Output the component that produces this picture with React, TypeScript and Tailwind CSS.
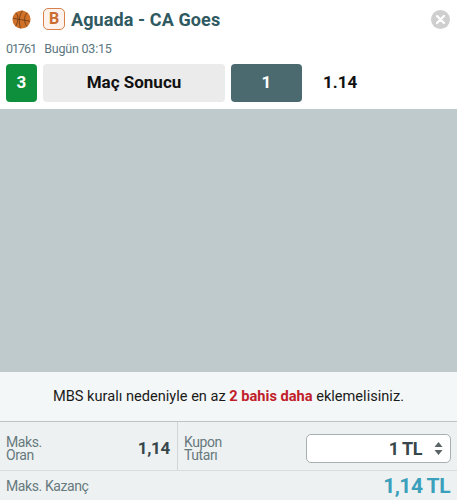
export default function App() {
  return (
    <div className="w-[457px] h-[500px] overflow-hidden flex flex-col bg-white font-['Roboto',sans-serif]">
      {/* match title */}
      <div className="h-[38px] flex items-center pl-3 pr-[7px] shrink-0">
        <svg width="19" height="19" viewBox="0 0 20 20" className="shrink-0">
          <circle cx="10" cy="10" r="9.5" fill="#d0712a" />
          <g fill="none" stroke="#6e3c16" strokeWidth="0.9">
            <path d="M1 8.5 C6 10 14 10.5 19 12" />
            <path d="M11 .6 C7 6 7 14 9 19.4" />
            <path d="M4 3 C7 6 7 11 4 17" />
            <path d="M16 3 C12.500 6.500 12.500 12 15.500 17.500" />
          </g>
        </svg>
        <div className="ml-[12px] w-[22px] h-[22px] rounded-[5px] border border-[#d9814a] bg-[#fdf3ec] flex items-center justify-center text-[16px] font-bold text-[#cc6d30] shrink-0">
          B
        </div>
        <div className="ml-[6px] text-[18px] font-bold text-[#2f5a61] tracking-[0.1px]">Aguada - CA Goes</div>
        <div className="ml-auto w-[19px] h-[19px] rounded-full bg-[#cfcfcf] flex items-center justify-center shrink-0">
          <svg width="9" height="9" viewBox="0 0 9 9">
            <path d="M1 1 L8 8 M8 1 L1 8" stroke="#fff" strokeWidth="2.200" strokeLinecap="round" />
          </svg>
        </div>
      </div>

      <div className="h-[20px] mt-[1px] flex items-center pl-[6px] text-[12.5px] text-[#5c7780] shrink-0">
        <span className="tracking-[-1px]">01761</span>
        <span className="ml-[8px] tracking-[-0.2px]">Bugün 03:15</span>
      </div>

      {/* selected bet */}
      <div className="mt-[5px] h-[38px] flex items-center pl-[6px] shrink-0">
        <div className="w-[31px] h-[38px] rounded-[4px] bg-[#0e8f3c] flex items-center justify-center text-white font-bold text-[17px]">3</div>
        <div className="ml-[6px] w-[182px] h-[38px] rounded-[4px] bg-[#ebebeb] flex items-center justify-center text-[#111] font-bold text-[17px]">Maç Sonucu</div>
        <div className="ml-[6px] w-[71px] h-[38px] rounded-[4px] bg-[#4a6a70] flex items-center justify-center text-white font-bold text-[17px]">1</div>
        <div className="ml-[21px] text-[17px] font-bold text-[#111]">1.14</div>
      </div>

      <div className="mt-[7px] h-[263px] bg-[#bfcacc] shrink-0" />

      {/* MBS warning */}
      <div className="h-[50px] bg-[#f4f7f7] border-b border-[#bcc4c6] flex items-center justify-center text-[14.6px] text-[#1a1a1a] shrink-0">
        <span>
          MBS kuralı nedeniyle en az <b className="text-[#c0202a] font-bold">2 bahis daha</b> eklemelisiniz.
        </span>
      </div>

      {/* coupon footer */}
      <div className="h-[49px] flex bg-[#eef1f2] border-b border-[#d8dddf] shrink-0">
        <div className="w-[178px] border-r border-[#d0d6d8] flex items-center justify-between pl-[6px] pr-[7px] pt-[5px]">
          <div className="text-[14px] leading-[13px] tracking-[-0.4px] text-[#66797d]">
            Maks.
            <br />
            Oran
          </div>
          <div className="text-[17px] font-bold tracking-[-0.3px] text-[#37474b]">1,14</div>
        </div>
        <div className="flex-1 flex items-center pl-[6px] pr-[6px] pt-[5px]">
          <div className="text-[14px] leading-[13px] tracking-[-0.4px] text-[#66797d]">
            Kupon
            <br />
            Tutarı
          </div>
          <div className="ml-auto w-[145px] h-[29px] rounded-[5px] bg-white border border-[#a9b0b2] flex items-center justify-end pr-[7px] text-[18px] font-bold tracking-[-0.5px] text-[#37474b]">
            1 TL
            <svg width="9" height="15" viewBox="0 0 9 15" className="ml-[12px]">
              <path d="M4.500 1 L8.500 6 L.5 6 Z M4.500 14 L8.500 9 L.5 9 Z" fill="#5a6467" />
            </svg>
          </div>
        </div>
      </div>

      <div className="flex-1 flex items-center justify-between pl-[6px] pr-[7px] bg-[#eef1f2]">
        <div className="text-[14px] tracking-[-0.4px] text-[#66797d]">Maks. Kazanç</div>
        <div className="text-[21px] font-bold tracking-[-0.5px] text-[#3ba0bb]">1,14 TL</div>
      </div>
    </div>
  );
}
